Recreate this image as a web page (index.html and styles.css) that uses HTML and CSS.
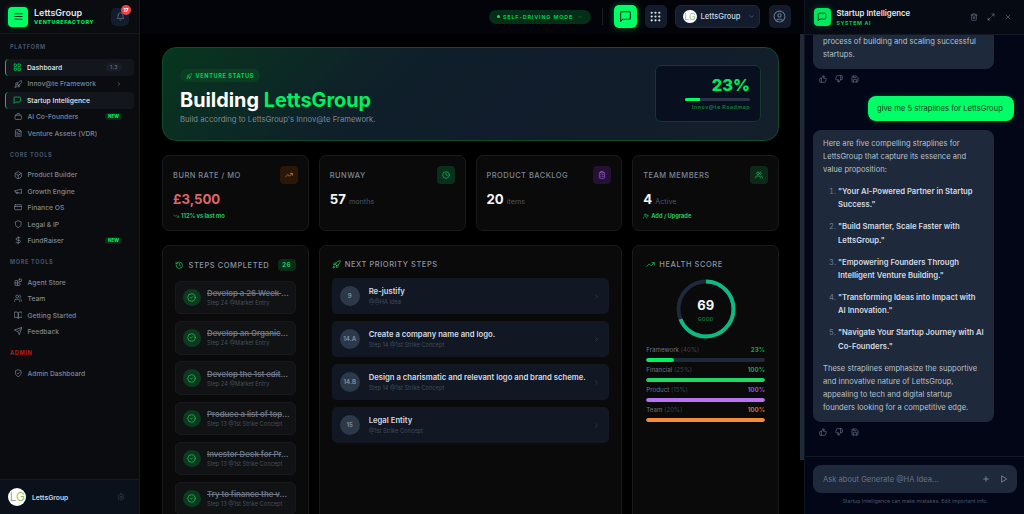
FILE: index.html
```html
<!DOCTYPE html>
<html lang="en">
<head>
    <meta charset="UTF-8">
    <meta name="viewport" content="width=device-width, initial-scale=1.0">
    <title>LettsGroup</title>
    <link rel="stylesheet" href="styles.css">
</head>
<body>
    <svg class="defs" width="0" height="0">
        <symbol id="i-menu" viewBox="0 0 24 24"><path d="M4 6h16M4 12h16M4 18h16"/></symbol>
        <symbol id="i-bell" viewBox="0 0 24 24"><path d="M6 8a6 6 0 0 1 12 0c0 7 3 9 3 9H3s3-2 3-9"/><path d="M10.3 21a1.94 1.94 0 0 0 3.4 0"/></symbol>
        <symbol id="i-dash" viewBox="0 0 24 24"><rect x="3" y="3" width="7" height="7" rx="1"/><rect x="14" y="3" width="7" height="7" rx="1"/><rect x="14" y="14" width="7" height="7" rx="1"/><rect x="3" y="14" width="7" height="7" rx="1"/></symbol>
        <symbol id="i-rocket" viewBox="0 0 24 24"><path d="M4.5 16.5c-1.5 1.26-2 5-2 5s3.74-.5 5-2c.71-.84.7-2.13-.09-2.91a2.18 2.18 0 0 0-2.91-.09z"/><path d="m12 15-3-3a22 22 0 0 1 2-3.95A12.88 12.88 0 0 1 22 2c0 2.72-.78 7.5-6 11a22.35 22.35 0 0 1-4 2z"/><path d="M9 12H4s.55-3.03 2-4c1.62-1.08 5 0 5 0"/><path d="M12 15v5s3.03-.55 4-2c1.08-1.62 0-5 0-5"/></symbol>
        <symbol id="i-msg" viewBox="0 0 24 24"><path d="M21 15a2 2 0 0 1-2 2H7l-4 4V5a2 2 0 0 1 2-2h14a2 2 0 0 1 2 2z"/></symbol>
        <symbol id="i-bot" viewBox="0 0 24 24"><rect x="3" y="9" width="18" height="12" rx="2"/><path d="M8 9V6a2 2 0 0 1 2-2h4a2 2 0 0 1 2 2v3"/></symbol>
        <symbol id="i-file" viewBox="0 0 24 24"><path d="M15 2H6a2 2 0 0 0-2 2v16a2 2 0 0 0 2 2h12a2 2 0 0 0 2-2V7z"/><path d="M14 2v5h6M16 13H8M16 17H8M10 9H8"/></symbol>
        <symbol id="i-box" viewBox="0 0 24 24"><path d="M21 8a2 2 0 0 0-1-1.73l-7-4a2 2 0 0 0-2 0l-7 4A2 2 0 0 0 3 8v8a2 2 0 0 0 1 1.73l7 4a2 2 0 0 0 2 0l7-4A2 2 0 0 0 21 16Z"/><path d="m3.3 7 8.7 5 8.7-5M12 22V12"/></symbol>
        <symbol id="i-mega" viewBox="0 0 24 24"><path d="m3 11 18-5v12L3 14v-3z"/><path d="M11.6 16.8a3 3 0 1 1-5.8-1.6"/></symbol>
        <symbol id="i-card" viewBox="0 0 24 24"><rect x="2" y="5" width="20" height="14" rx="2"/><path d="M2 10h20"/></symbol>
        <symbol id="i-shield" viewBox="0 0 24 24"><path d="M12 22s8-4 8-10V5l-8-3-8 3v7c0 6 8 10 8 10z"/></symbol>
        <symbol id="i-shieldc" viewBox="0 0 24 24"><path d="M12 22s8-4 8-10V5l-8-3-8 3v7c0 6 8 10 8 10z"/><path d="m9 12 2 2 4-4"/></symbol>
        <symbol id="i-dollar" viewBox="0 0 24 24"><path d="M12 2v20M17 5H9.5a3.5 3.5 0 0 0 0 7h5a3.5 3.5 0 0 1 0 7H6"/></symbol>
        <symbol id="i-blocks" viewBox="0 0 24 24"><rect x="14" y="3" width="7" height="7" rx="1"/><path d="M10 21V8a1 1 0 0 0-1-1H4a1 1 0 0 0-1 1v12a1 1 0 0 0 1 1h12a1 1 0 0 0 1-1v-5a1 1 0 0 0-1-1H3"/></symbol>
        <symbol id="i-users" viewBox="0 0 24 24"><path d="M16 21v-2a4 4 0 0 0-4-4H6a4 4 0 0 0-4 4v2"/><circle cx="9" cy="7" r="4"/><path d="M22 21v-2a4 4 0 0 0-3-3.87M16 3.13a4 4 0 0 1 0 7.75"/></symbol>
        <symbol id="i-book" viewBox="0 0 24 24"><path d="M2 3h6a4 4 0 0 1 4 4v14a3 3 0 0 0-3-3H2z"/><path d="M22 3h-6a4 4 0 0 0-4 4v14a3 3 0 0 1 3-3h7z"/></symbol>
        <symbol id="i-send" viewBox="0 0 24 24"><path d="m22 2-7 20-4-9-9-4Z"/><path d="M22 2 11 13"/></symbol>
        <symbol id="i-gear" viewBox="0 0 24 24"><path d="M12.22 2h-.44a2 2 0 0 0-2 2v.18a2 2 0 0 1-1 1.73l-.43.25a2 2 0 0 1-2 0l-.15-.08a2 2 0 0 0-2.73.73l-.22.38a2 2 0 0 0 .73 2.73l.15.1a2 2 0 0 1 1 1.72v.51a2 2 0 0 1-1 1.74l-.15.09a2 2 0 0 0-.73 2.73l.22.38a2 2 0 0 0 2.73.73l.15-.08a2 2 0 0 1 2 0l.43.25a2 2 0 0 1 1 1.73V20a2 2 0 0 0 2 2h.44a2 2 0 0 0 2-2v-.18a2 2 0 0 1 1-1.73l.43-.25a2 2 0 0 1 2 0l.15.08a2 2 0 0 0 2.73-.73l.22-.39a2 2 0 0 0-.73-2.73l-.15-.08a2 2 0 0 1-1-1.74v-.5a2 2 0 0 1 1-1.74l.15-.09a2 2 0 0 0 .73-2.73l-.22-.38a2 2 0 0 0-2.73-.73l-.15.08a2 2 0 0 1-2 0l-.43-.25a2 2 0 0 1-1-1.73V4a2 2 0 0 0-2-2z"/><circle cx="12" cy="12" r="3"/></symbol>
        <symbol id="i-right" viewBox="0 0 24 24"><path d="m9 18 6-6-6-6"/></symbol>
        <symbol id="i-down" viewBox="0 0 24 24"><path d="m6 9 6 6 6-6"/></symbol>
        <symbol id="i-trend" viewBox="0 0 24 24"><path d="M22 7l-8.500 8.500-5-5L2 17"/><path d="M16 7h6v6"/></symbol>
        <symbol id="i-trenddown" viewBox="0 0 24 24"><path d="M22 17l-8.500-8.500-5 5L2 7"/><path d="M16 17h6v-6"/></symbol>
        <symbol id="i-clock" viewBox="0 0 24 24"><circle cx="12" cy="12" r="10"/><path d="M12 6v6l4 2"/></symbol>
        <symbol id="i-clip" viewBox="0 0 24 24"><rect x="8" y="2" width="8" height="4" rx="1"/><path d="M16 4h2a2 2 0 0 1 2 2v14a2 2 0 0 1-2 2H6a2 2 0 0 1-2-2V6a2 2 0 0 1 2-2h2M12 11h4M12 16h4M8 11h.01M8 16h.01"/></symbol>
        <symbol id="i-userplus" viewBox="0 0 24 24"><path d="M16 21v-2a4 4 0 0 0-4-4H6a4 4 0 0 0-4 4v2"/><circle cx="9" cy="7" r="4"/><path d="M19 8v6M22 11h-6"/></symbol>
        <symbol id="i-history" viewBox="0 0 24 24"><path d="M3 12a9 9 0 1 0 9-9 9.750 9.750 0 0 0-6.740 2.740L3 8"/><path d="M3 3v5h5M12 7v5l4 2"/></symbol>
        <symbol id="i-check" viewBox="0 0 24 24"><circle cx="12" cy="12" r="10"/><path d="m9 12 2 2 4-4"/></symbol>
        <symbol id="i-up" viewBox="0 0 24 24"><path d="M7 10v12"/><path d="M15 5.880 14 10h5.830a2 2 0 0 1 1.920 2.560l-2.330 8A2 2 0 0 1 17.500 22H4a2 2 0 0 1-2-2v-8a2 2 0 0 1 2-2h2.760a2 2 0 0 0 1.790-1.110L12 2a3.130 3.130 0 0 1 3 3.880Z"/></symbol>
        <symbol id="i-dn" viewBox="0 0 24 24"><path d="M17 14V2"/><path d="M9 18.120 10 14H4.170a2 2 0 0 1-1.920-2.560l2.330-8A2 2 0 0 1 6.500 2H20a2 2 0 0 1 2 2v8a2 2 0 0 1-2 2h-2.760a2 2 0 0 0-1.790 1.110L12 22a3.130 3.130 0 0 1-3-3.880Z"/></symbol>
        <symbol id="i-save" viewBox="0 0 24 24"><path d="M15.200 3a2 2 0 0 1 1.400.6l3.800 3.800a2 2 0 0 1 .6 1.400V19a2 2 0 0 1-2 2H5a2 2 0 0 1-2-2V5a2 2 0 0 1 2-2z"/><path d="M17 21v-7a1 1 0 0 0-1-1H8a1 1 0 0 0-1 1v7M7 3v4a1 1 0 0 0 1 1h7"/></symbol>
        <symbol id="i-trash" viewBox="0 0 24 24"><path d="M3 6h18M19 6v14a2 2 0 0 1-2 2H7a2 2 0 0 1-2-2V6M8 6V4a2 2 0 0 1 2-2h4a2 2 0 0 1 2 2v2M10 11v6M14 11v6"/></symbol>
        <symbol id="i-expand" viewBox="0 0 24 24"><path d="m21 3-7 7M3 21l7-7M15 3h6v6M9 21H3v-6"/></symbol>
        <symbol id="i-x" viewBox="0 0 24 24"><path d="M18 6 6 18M6 6l12 12"/></symbol>
        <symbol id="i-plus" viewBox="0 0 24 24"><path d="M5 12h14M12 5v14"/></symbol>
        <symbol id="i-play" viewBox="0 0 24 24"><path d="M6 3l14 9-14 9z"/></symbol>
        <symbol id="i-user" viewBox="0 0 24 24"><circle cx="12" cy="12" r="10"/><circle cx="12" cy="10" r="3"/><path d="M7 20.660V19a2 2 0 0 1 2-2h6a2 2 0 0 1 2 2v1.660"/></symbol>
    </svg>

    <div class="app">

        <aside class="sidebar">
            <div class="side-head">
                <div class="logo"><svg class="ic"><use href="#i-menu"/></svg></div>
                <div class="brand">
                    <div class="brand-name">LettsGroup</div>
                    <div class="brand-sub">VENTUREFACTORY</div>
                </div>
                <div class="bell">
                    <svg class="ic"><use href="#i-bell"/></svg>
                    <span class="bell-count">17</span>
                </div>
            </div>

            <nav class="side-nav">
                <div class="nav-label">PLATFORM</div>
                <a class="nav-item active"><svg class="ic green"><use href="#i-dash"/></svg>Dashboard<span class="ver">1.3</span></a>
                <a class="nav-item"><svg class="ic"><use href="#i-rocket"/></svg>Innov@te Framework<svg class="ic nav-arrow"><use href="#i-right"/></svg></a>
                <a class="nav-item active"><svg class="ic green"><use href="#i-msg"/></svg>Startup Intelligence</a>
                <a class="nav-item"><svg class="ic"><use href="#i-bot"/></svg>AI Co-Founders<span class="new">NEW</span></a>
                <a class="nav-item"><svg class="ic"><use href="#i-file"/></svg>Venture Assets (VDR)</a>

                <div class="nav-label">CORE TOOLS</div>
                <a class="nav-item"><svg class="ic"><use href="#i-box"/></svg>Product Builder</a>
                <a class="nav-item"><svg class="ic"><use href="#i-mega"/></svg>Growth Engine</a>
                <a class="nav-item"><svg class="ic"><use href="#i-card"/></svg>Finance OS</a>
                <a class="nav-item"><svg class="ic"><use href="#i-shield"/></svg>Legal &amp; IP</a>
                <a class="nav-item"><svg class="ic"><use href="#i-dollar"/></svg>FundRaiser<span class="new">NEW</span></a>

                <div class="nav-label">MORE TOOLS</div>
                <a class="nav-item"><svg class="ic"><use href="#i-blocks"/></svg>Agent Store</a>
                <a class="nav-item"><svg class="ic"><use href="#i-users"/></svg>Team</a>
                <a class="nav-item"><svg class="ic"><use href="#i-book"/></svg>Getting Started</a>
                <a class="nav-item"><svg class="ic"><use href="#i-send"/></svg>Feedback</a>

                <div class="nav-label red">ADMIN</div>
                <a class="nav-item"><svg class="ic"><use href="#i-shieldc"/></svg>Admin Dashboard</a>
            </nav>

            <div class="side-foot">
                <div class="avatar"><span>L</span><span class="avatar-g">G</span></div>
                <div class="foot-name">LettsGroup</div>
                <svg class="ic foot-gear"><use href="#i-gear"/></svg>
            </div>
        </aside>

        <main class="main">
            <header class="topbar">
                <div class="mode"><span class="mode-dot"></span>SELF-DRIVING MODE<svg class="ic"><use href="#i-down"/></svg></div>
                <div class="top-sep"></div>
                <div class="top-btn chat-btn"><svg class="ic"><use href="#i-msg"/></svg></div>
                <div class="top-btn">
                    <svg class="ic dots" viewBox="0 0 24 24"><circle cx="5" cy="5" r="2"/><circle cx="12" cy="5" r="2"/><circle cx="19" cy="5" r="2"/><circle cx="5" cy="12" r="2"/><circle cx="12" cy="12" r="2"/><circle cx="19" cy="12" r="2"/><circle cx="5" cy="19" r="2"/><circle cx="12" cy="19" r="2"/><circle cx="19" cy="19" r="2"/></svg>
                </div>
                <div class="org">
                    <div class="avatar small"><span>L</span><span class="avatar-g">G</span></div>
                    LettsGroup
                    <svg class="ic"><use href="#i-down"/></svg>
                </div>
                <div class="top-btn user-btn"><svg class="ic"><use href="#i-user"/></svg></div>
            </header>

            <div class="main-body">
                <div class="content">
                    <section class="hero">
                        <div>
                            <div class="tag"><svg class="ic"><use href="#i-rocket"/></svg>VENTURE STATUS</div>
                            <h1>Building <span>LettsGroup</span></h1>
                            <p>Build according to LettsGroup's Innov@te Framework.</p>
                        </div>
                        <div class="road">
                            <div class="road-pct">23%</div>
                            <div class="road-bar"><div class="road-fill"></div></div>
                            <div class="road-label">Innov@te Roadmap</div>
                        </div>
                    </section>

                    <section class="stats">
                        <div class="card stat">
                            <div class="stat-head">BURN RATE / MO<div class="stat-ic orange"><svg class="ic"><use href="#i-trend"/></svg></div></div>
                            <div class="stat-val burn">£3,500</div>
                            <div class="stat-note"><svg class="ic"><use href="#i-trenddown"/></svg>112% vs last mo</div>
                        </div>
                        <div class="card stat">
                            <div class="stat-head">RUNWAY<div class="stat-ic greenbox"><svg class="ic"><use href="#i-clock"/></svg></div></div>
                            <div class="stat-val">57 <small>months</small></div>
                        </div>
                        <div class="card stat">
                            <div class="stat-head">PRODUCT BACKLOG<div class="stat-ic purple"><svg class="ic"><use href="#i-clip"/></svg></div></div>
                            <div class="stat-val">20 <small>items</small></div>
                        </div>
                        <div class="card stat">
                            <div class="stat-head">TEAM MEMBERS<div class="stat-ic teal"><svg class="ic"><use href="#i-users"/></svg></div></div>
                            <div class="stat-val">4 <small>Active</small></div>
                            <div class="stat-note"><svg class="ic"><use href="#i-userplus"/></svg>Add / Upgrade</div>
                        </div>
                    </section>

                    <section class="lower">
                        <div class="card steps">
                            <div class="steps-head"><svg class="ic"><use href="#i-history"/></svg>STEPS COMPLETED<span class="count">26</span></div>
                            <div class="step"><div class="step-ic"><svg class="ic"><use href="#i-check"/></svg></div><div class="step-txt"><div class="step-t"><s>Develop a 26 Week </s>...</div><div class="step-s">Step 24 @Market Entry</div></div></div>
                            <div class="step"><div class="step-ic"><svg class="ic"><use href="#i-check"/></svg></div><div class="step-txt"><div class="step-t"><s>Develop an Organic</s>...</div><div class="step-s">Step 24 @Market Entry</div></div></div>
                            <div class="step"><div class="step-ic"><svg class="ic"><use href="#i-check"/></svg></div><div class="step-txt"><div class="step-t"><s>Develop the 1st edit</s>...</div><div class="step-s">Step 24 @Market Entry</div></div></div>
                            <div class="step"><div class="step-ic"><svg class="ic"><use href="#i-check"/></svg></div><div class="step-txt"><div class="step-t"><s>Produce a list of top</s>...</div><div class="step-s">Step 13 @1st Strike Concept</div></div></div>
                            <div class="step"><div class="step-ic"><svg class="ic"><use href="#i-check"/></svg></div><div class="step-txt"><div class="step-t"><s>Investor Deck for Pr</s>...</div><div class="step-s">Step 13 @1st Strike Concept</div></div></div>
                            <div class="step"><div class="step-ic"><svg class="ic"><use href="#i-check"/></svg></div><div class="step-txt"><div class="step-t"><s>Try to finance the v</s>...</div><div class="step-s">Step 13 @1st Strike Concept</div></div></div>
                        </div>

                        <div class="card next">
                            <div class="card-head"><svg class="ic"><use href="#i-rocket"/></svg>NEXT PRIORITY STEPS</div>
                            <div class="prio"><div class="prio-num">9</div><div class="prio-txt"><div class="prio-t">Re-justify</div><div class="prio-s">@@HA Idea</div></div><svg class="ic"><use href="#i-right"/></svg></div>
                            <div class="prio"><div class="prio-num">14.A</div><div class="prio-txt"><div class="prio-t">Create a company name and logo.</div><div class="prio-s">Step 14 @1st Strike Concept</div></div><svg class="ic"><use href="#i-right"/></svg></div>
                            <div class="prio"><div class="prio-num">14.B</div><div class="prio-txt"><div class="prio-t">Design a charismatic and relevant logo and brand scheme.</div><div class="prio-s">Step 14 @1st Strike Concept</div></div><svg class="ic"><use href="#i-right"/></svg></div>
                            <div class="prio"><div class="prio-num">15</div><div class="prio-txt"><div class="prio-t">Legal Entity</div><div class="prio-s">@1st Strike Concept</div></div><svg class="ic"><use href="#i-right"/></svg></div>
                        </div>

                        <div class="card health">
                            <div class="card-head"><svg class="ic"><use href="#i-trend"/></svg>HEALTH SCORE</div>
                            <div class="ring">
                                <svg viewBox="0 0 60 60">
                                    <circle class="ring-bg" cx="30" cy="30" r="27.500"/>
                                    <circle class="ring-fg" cx="30" cy="30" r="27.500" pathLength="100" stroke-dasharray="69 100" transform="rotate(-90 30 30)"/>
                                </svg>
                                <div class="ring-txt"><b>69</b><span>GOOD</span></div>
                            </div>
                            <div class="meter"><div class="meter-row"><span>Framework <i>(40%)</i></span><b class="c-green">23%</b></div><div class="meter-bar"><div class="meter-fill bg-green" style="width:23%"></div></div></div>
                            <div class="meter"><div class="meter-row"><span>Financial <i>(25%)</i></span><b class="c-lime">100%</b></div><div class="meter-bar"><div class="meter-fill bg-lime" style="width:100%"></div></div></div>
                            <div class="meter"><div class="meter-row"><span>Product <i>(15%)</i></span><b class="c-purple">100%</b></div><div class="meter-bar"><div class="meter-fill bg-purple" style="width:100%"></div></div></div>
                            <div class="meter"><div class="meter-row"><span>Team <i>(20%)</i></span><b class="c-orange">100%</b></div><div class="meter-bar"><div class="meter-fill bg-orange" style="width:100%"></div></div></div>
                        </div>
                    </section>
                </div>
                <div class="main-thumb"></div>
            </div>
        </main>

        <aside class="chat">
            <div class="chat-head">
                <div class="chat-logo"><svg class="ic"><use href="#i-msg"/></svg></div>
                <div class="chat-title">
                    <div class="chat-name">Startup Intelligence</div>
                    <div class="chat-sub">SYSTEM AI</div>
                </div>
                <div class="chat-tools">
                    <svg class="ic"><use href="#i-trash"/></svg>
                    <svg class="ic"><use href="#i-expand"/></svg>
                    <svg class="ic"><use href="#i-x"/></svg>
                </div>
            </div>

            <div class="chat-msgs">
                <div class="bubble first">process of building and scaling successful startups.</div>
                <div class="msg-acts">
                    <svg class="ic"><use href="#i-up"/></svg>
                    <svg class="ic"><use href="#i-dn"/></svg>
                    <svg class="ic"><use href="#i-save"/></svg>
                </div>
                <div class="bubble me">give me 5 straplines for LettsGroup</div>
                <div class="bubble">
                    <p>Here are five compelling straplines for LettsGroup that capture its essence and value proposition:</p>
                    <ol>
                        <li><b>"Your AI-Powered Partner in Startup Success."</b></li>
                        <li><b>"Build Smarter, Scale Faster with LettsGroup."</b></li>
                        <li><b>"Empowering Founders Through Intelligent Venture Building."</b></li>
                        <li><b>"Transforming Ideas into Impact with AI Innovation."</b></li>
                        <li><b>"Navigate Your Startup Journey with AI Co-Founders."</b></li>
                    </ol>
                    <p class="last">These straplines emphasize the supportive and innovative nature of LettsGroup, appealing to tech and digital startup founders looking for a competitive edge.</p>
                </div>
                <div class="msg-acts">
                    <svg class="ic"><use href="#i-up"/></svg>
                    <svg class="ic"><use href="#i-dn"/></svg>
                    <svg class="ic"><use href="#i-save"/></svg>
                </div>
            </div>

            <div class="chat-foot">
                <div class="chat-input">
                    <span>Ask about Generate @HA Idea...</span>
                    <svg class="ic"><use href="#i-plus"/></svg>
                    <svg class="ic"><use href="#i-play"/></svg>
                </div>
                <div class="chat-note">Startup Intelligence can make mistakes. Edit important info.</div>
            </div>
        </aside>
    </div>
</body>
</html>
```

FILE: styles.css
```css
*{
    margin: 0;
    padding: 0;
    box-sizing: border-box;
}
html, body{
    height: 100%;
    overflow: hidden;
    background: #000;
}
body{
    font-family: Inter, "Liberation Sans", sans-serif;
    color: #e2e8f0;
}
.defs{
    position: absolute;
}
.ic{
    width: 8px;
    height: 8px;
    flex: none;
    fill: none;
    stroke: currentColor;
    stroke-width: 2;
    stroke-linecap: round;
    stroke-linejoin: round;
}
.app{
    display: flex;
    height: 514px;
}

/* sidebar */
.sidebar{
    width: 140px;
    flex: none;
    display: flex;
    flex-direction: column;
    background: #0a0c10;
    border-right: 1px solid #14181f;
}
.side-head{
    height: 34px;
    flex: none;
    display: flex;
    align-items: center;
    padding: 0 10px 0 8px;
    border-bottom: 1px solid #141a24;
}
.logo{
    width: 20px;
    height: 20px;
    border-radius: 4px;
    background: #00ff66;
    color: #06210f;
    display: flex;
    align-items: center;
    justify-content: center;
    box-shadow: 0 0 6px rgba(0,255,102,.25);
}
.logo .ic{
    width: 11px;
    height: 11px;
}
.brand{
    margin-left: 6px;
    flex: 1;
}
.brand-name{
    font-size: 9px;
    font-weight: 600;
    line-height: 11px;
    color: #dfe5ed;
}
.brand-sub{
    font-size: 5.400px;
    font-weight: 800;
    line-height: 8px;
    letter-spacing: .6px;
    color: #00e85d;
}
.bell{
    position: relative;
    width: 18px;
    height: 18px;
    border-radius: 5px;
    background: #131c2c;
    color: #64748b;
    display: flex;
    align-items: center;
    justify-content: center;
}
.bell .ic{
    width: 9px;
    height: 9px;
}
.bell-count{
    position: absolute;
    top: -3px;
    right: -2px;
    width: 10px;
    height: 10px;
    border-radius: 50%;
    background: #ef4444;
    color: #fff;
    font-size: 5px;
    font-weight: 700;
    line-height: 10px;
    text-align: center;
}
.side-nav{
    flex: 1;
    padding: 0 5px;
}
.nav-label{
    padding-left: 5px;
    margin: 9.200px 0 7px;
    height: 9px;
    line-height: 9px;
    font-size: 5.500px;
    font-weight: 700;
    letter-spacing: .7px;
    color: #475569;
}
.nav-label.red{
    color: #b91c1c;
}
.nav-item{
    display: flex;
    align-items: center;
    height: 16.450px;
    padding-left: 8.500px;
    padding-right: 12px;
    font-size: 6.750px;
    font-weight: 500;
    color: #7c8797;
    border-radius: 4px;
}
.nav-item > .ic:first-child{
    width: 8.500px;
    height: 8.500px;
    margin-right: 5.500px;
}
.nav-item.active{
    background: #13161c;
    color: #e2e8f0;
    border-left: 1.500px solid #00c853;
    padding-left: 7px;
}
.ic.green{
    color: #00d455;
}
.nav-arrow{
    margin-left: auto;
    width: 6px;
    height: 6px;
}
.ver{
    margin-left: auto;
    font-size: 5px;
    background: #1a1e26;
    padding: 1px 4px;
    border-radius: 4px;
    color: #64748b;
    letter-spacing: .5px;
}
.new{
    margin-left: auto;
    font-size: 4.500px;
    font-weight: 800;
    background: #0d2a19;
    color: #00e85d;
    padding: 1px 3px;
    border-radius: 3px;
}
.side-foot{
    height: 35px;
    flex: none;
    display: flex;
    align-items: center;
    padding: 0 14px 0 8px;
    background: #0b111b;
    border-top: 1px solid #141a24;
}
.avatar{
    width: 18px;
    height: 18px;
    border-radius: 50%;
    background: #fff;
    color: #8a9099;
    display: flex;
    align-items: center;
    justify-content: center;
    font-size: 12px;
    font-weight: 300;
    letter-spacing: -.5px;
    line-height: 1;
    flex: none;
}
.avatar-g{
    color: #7cb342;
}
.avatar.small{
    width: 13.500px;
    height: 13.500px;
    font-size: 9px;
}
.foot-name{
    margin-left: 6px;
    flex: 1;
    font-size: 6.800px;
    font-weight: 600;
    color: #cbd5e1;
}
.foot-gear{
    color: #334155;
}

/* top bar */
.main{
    flex: 1;
    min-width: 0;
    display: flex;
    flex-direction: column;
    background: #000;
}
.topbar{
    height: 34px;
    flex: none;
    display: flex;
    align-items: center;
    justify-content: flex-end;
    padding: 0 13px 1px 0;
    background: #02040a;
}
.mode{
    height: 14px;
    width: 102px;
    border-radius: 7px;
    background: #052e16;
    color: #00c853;
    display: flex;
    align-items: center;
    justify-content: center;
    font-size: 5.400px;
    font-weight: 700;
    letter-spacing: .85px;
}
.mode .ic{
    width: 6px;
    height: 6px;
    margin-left: 4px;
    color: #15803d;
}
.mode-dot{
    width: 3px;
    height: 3px;
    border-radius: 50%;
    background: #00e85d;
    margin-right: 3px;
}
.top-sep{
    width: 1px;
    height: 17px;
    background: #18202c;
    margin: 0 11px;
}
.top-btn{
    width: 22.500px;
    height: 22.500px;
    border-radius: 5px;
    background: #131c2c;
    color: #94a3b8;
    display: flex;
    align-items: center;
    justify-content: center;
    margin-right: 8px;
}
.top-btn .ic{
    width: 13px;
    height: 13px;
}
.chat-btn{
    background: #00ff66;
    color: #05361a;
    box-shadow: 0 0 7px rgba(0,255,102,.4);
}
.dots{
    fill: #e2e8f0;
    stroke: none;
}
.org{
    width: 85px;
    height: 23px;
    border-radius: 6px;
    background: #131c2c;
    border: 1px solid #1e293b;
    display: flex;
    align-items: center;
    padding-left: 7px;
    gap: 4px;
    font-size: 7.600px;
    font-weight: 500;
    color: #cbd5e1;
    margin-right: 8.500px;
}
.org .ic{
    width: 7px;
    height: 7px;
    margin-left: 3px;
    color: #64748b;
}
.user-btn{
    margin-right: 0;
    color: #64748b;
}
.main-body{
    flex: 1;
    min-height: 0;
    display: flex;
}
.content{
    flex: 1;
    min-width: 0;
    padding: 13px 21px 0 22px;
    overflow: hidden;
}
.main-thumb{
    width: 4px;
    height: 426px;
    flex: none;
    background: #1e293b;
}

/* hero */
.hero{
    height: 94px;
    display: flex;
    align-items: center;
    justify-content: space-between;
    padding: 0 17px;
    border: 1px solid #124a2a;
    border-radius: 14px;
    background: linear-gradient(135deg, #07361e 0%, #0f2029 35%, #111c2c 60%, #131f2a 100%);
}
.tag{
    display: inline-flex;
    align-items: center;
    height: 13px;
    padding: 0 6px;
    border-radius: 7px;
    background: #0b3d22;
    color: #00d455;
    font-size: 5.600px;
    font-weight: 700;
    letter-spacing: .6px;
}
.tag .ic{
    width: 6.500px;
    height: 6.500px;
    margin-right: 3px;
}
.hero h1{
    font-size: 19.850px;
    font-weight: 700;
    line-height: 24px;
    margin-top: 5px;
    color: #fff;
}
.hero h1 span{
    color: #00f060;
}
.hero p{
    font-size: 7.700px;
    line-height: 11px;
    margin-top: 2px;
    color: #7c8797;
}
.road{
    width: 106px;
    height: 57px;
    padding: 10px 10px 0 0;
    margin-top: -1px;
    border: 1px solid #103a2a;
    border-radius: 6px;
    background: #08101f;
    text-align: right;
}
.road-pct{
    font-size: 16.500px;
    font-weight: 800;
    line-height: 18px;
    color: #00e85d;
}
.road-bar{
    width: 65px;
    height: 3px;
    margin: 3.500px 0 0 auto;
    border-radius: 2px;
    background: #2a3648;
    overflow: hidden;
}
.road-fill{
    width: 23%;
    height: 100%;
    background: #00ff66;
}
.road-label{
    margin-top: 3.500px;
    font-size: 5.300px;
    font-weight: 600;
    letter-spacing: .5px;
    color: #15803d;
}

/* cards */
.card{
    background: #0a0a0a;
    border: 1px solid #181a1e;
    border-radius: 7px;
}
.stats{
    display: grid;
    grid-template-columns: repeat(4, 1fr);
    gap: 10px;
    margin-top: 14px;
}
.stat{
    height: 76px;
    padding: 10px 10px 0 10px;
}
.stat-head{
    display: flex;
    align-items: center;
    justify-content: space-between;
    font-size: 7.500px;
    font-weight: 500;
    letter-spacing: .45px;
    color: #7c8797;
}
.stat-ic{
    width: 18px;
    height: 18px;
    border-radius: 4px;
    display: flex;
    align-items: center;
    justify-content: center;
}
.orange{
    background: #2a1708;
    color: #f08c3a;
}
.greenbox{
    background: #08301a;
    color: #16c45c;
}
.purple{
    background: #231233;
    color: #a35fe0;
}
.teal{
    background: #0c2a19;
    color: #2eb865;
}
.stat-val{
    margin-top: 7px;
    height: 17px;
    line-height: 17px;
    font-size: 13.200px;
    font-weight: 700;
    color: #f5f7fa;
}
.stat-val small{
    font-size: 7.200px;
    font-weight: 400;
    color: #4b5563;
}
.stat-val.burn{
    color: #e0656b;
}
.stat-note{
    display: flex;
    align-items: center;
    margin-top: 4px;
    font-size: 5.700px;
    font-weight: 700;
    color: #22c55e;
}
.stat-note .ic{
    width: 6px;
    height: 6px;
    margin-right: 2px;
}
.lower{
    display: grid;
    grid-template-columns: 1fr 2.070fr 1fr;
    gap: 10px;
    margin-top: 14px;
}
.lower .card{
    height: 280px;
    overflow: hidden;
}
.steps{
    padding: 13px 12px 0;
}
.steps-head{
    display: flex;
    align-items: center;
    height: 12px;
    font-size: 7.500px;
    font-weight: 500;
    letter-spacing: .55px;
    color: #8a94a3;
    margin-bottom: 10px;
}
.steps-head .ic{
    color: #22c55e;
    width: 8.500px;
    height: 8.500px;
    margin-right: 5px;
}
.count{
    margin-left: auto;
    width: 18px;
    height: 12px;
    line-height: 12px;
    text-align: center;
    border-radius: 4px;
    background: #0b2c18;
    color: #22c55e;
    font-size: 6.300px;
    font-weight: 700;
}
.step{
    height: 33.400px;
    display: flex;
    align-items: center;
    padding: 0 7px;
    margin-bottom: 6.800px;
    border: 1px solid #16181c;
    border-radius: 5px;
    background: #111213;
}
.step-ic{
    width: 17.500px;
    height: 17.500px;
    border-radius: 50%;
    background: #0d3a1e;
    color: #22c55e;
    display: flex;
    align-items: center;
    justify-content: center;
    flex: none;
}
.step-ic .ic{
    width: 9px;
    height: 9px;
}
.step-txt{
    margin-left: 6.500px;
    min-width: 0;
}
.step-t{
    font-size: 7.800px;
    font-weight: 600;
    line-height: 10px;
    color: #6b7585;
    white-space: nowrap;
}
.step-s{
    font-size: 5.700px;
    line-height: 8px;
    margin-top: 1px;
    color: #454f5e;
    white-space: nowrap;
}
.next{
    padding: 12px 12px 0;
}
.card-head{
    display: flex;
    align-items: center;
    height: 12px;
    font-size: 7.500px;
    font-weight: 500;
    letter-spacing: .55px;
    color: #8a94a3;
    margin-bottom: 8px;
}
.card-head .ic{
    color: #22c55e;
    width: 9px;
    height: 9px;
    margin-right: 4px;
}
.prio{
    height: 36.300px;
    display: flex;
    align-items: center;
    padding: 0 9px 0 8px;
    margin-bottom: 6.700px;
    border-radius: 5px;
    background: #111823;
}
.prio > .ic{
    width: 7px;
    height: 7px;
    color: #3f4b5c;
}
.prio-num{
    width: 20px;
    height: 20px;
    border-radius: 50%;
    background: #2c394b;
    color: #7c8797;
    font-size: 6px;
    font-weight: 700;
    line-height: 20px;
    text-align: center;
    flex: none;
}
.prio-txt{
    flex: 1;
    margin-left: 9px;
}
.prio-t{
    font-size: 7.700px;
    font-weight: 600;
    line-height: 10px;
    color: #d5dbe3;
}
.prio-s{
    font-size: 5.700px;
    line-height: 8px;
    margin-top: 1px;
    color: #3f4b5c;
}
.health{
    padding: 12px 13px 0;
}
.health .card-head{
    margin-bottom: 9px;
}
.ring{
    position: relative;
    width: 60px;
    height: 60px;
    margin: 0 auto 6px;
}
.ring svg{
    width: 100%;
    height: 100%;
    fill: none;
    stroke-width: 4;
}
.ring-bg{
    stroke: #1e293b;
}
.ring-fg{
    stroke: #10b981;
}
.ring-txt{
    position: absolute;
    inset: 0;
    display: flex;
    flex-direction: column;
    align-items: center;
    justify-content: center;
    padding-top: 1px;
}
.ring-txt b{
    font-size: 13px;
    font-weight: 700;
    line-height: 15px;
    color: #f5f7fa;
}
.ring-txt span{
    margin-top: 3px;
    font-size: 4.800px;
    font-weight: 600;
    letter-spacing: .4px;
    color: #15803d;
}
.meter{
    margin-bottom: 3.500px;
}
.meter-row{
    display: flex;
    justify-content: space-between;
    height: 10px;
    line-height: 10px;
    font-size: 6.200px;
    color: #6b7583;
}
.meter-row i{
    font-style: normal;
    color: #374151;
}
.meter-row b{
    font-weight: 700;
}
.meter-bar{
    height: 3.500px;
    margin-top: 3px;
    border-radius: 2px;
    background: #1e293b;
    overflow: hidden;
}
.meter-fill{
    height: 100%;
    border-radius: 2px;
}
.bg-green{ background: #00f060; }
.bg-lime{ background: #22d565; }
.bg-purple{ background: #b874f0; }
.bg-orange{ background: #f08c3a; }
.c-green{ color: #16a34a; }
.c-lime{ color: #16a34a; }
.c-purple{ color: #9654cc; }
.c-orange{ color: #c9742e; }

/* chat panel */
.chat{
    width: 220px;
    flex: none;
    display: flex;
    flex-direction: column;
    background: #020617;
    border-left: 1px solid #10161f;
}
.chat-head{
    height: 35px;
    flex: none;
    display: flex;
    align-items: center;
    padding: 0 12px 0 8.500px;
    background: #060a12;
    border-bottom: 1px solid #131a26;
}
.chat-logo{
    width: 17.500px;
    height: 17.500px;
    border-radius: 4px;
    background: #00e85d;
    color: #06361a;
    display: flex;
    align-items: center;
    justify-content: center;
    box-shadow: 0 0 6px rgba(0,255,102,.3);
}
.chat-logo .ic{
    width: 10px;
    height: 10px;
}
.chat-title{
    flex: 1;
    margin-left: 5.500px;
}
.chat-name{
    font-size: 7.800px;
    font-weight: 600;
    line-height: 10px;
    color: #e2e8f0;
}
.chat-sub{
    font-size: 5.300px;
    font-weight: 700;
    line-height: 8px;
    letter-spacing: .6px;
    color: #00c853;
    margin-top: 1px;
}
.chat-tools{
    display: flex;
    gap: 9px;
    color: #64748b;
}
.chat-msgs{
    flex: 1;
    min-height: 0;
    overflow: hidden;
    padding: 0 8px;
    display: flex;
    flex-direction: column;
}
.bubble{
    width: 181px;
    padding: 0 10px;
    background: #1e293b;
    border-radius: 8px;
    font-size: 7.600px;
    line-height: 13.300px;
    color: #b6c0cd;
}
.bubble.first{
    padding: 0 10px 7px;
    border-radius: 0 0 8px 8px;
}
.bubble.me{
    width: 146px;
    height: 25px;
    align-self: flex-end;
    margin: 13px 2px 9px 0;
    padding: 0 9px;
    line-height: 25px;
    background: #00ff66;
    color: #0b3a22;
    box-shadow: 0 0 6px rgba(0,255,102,.2);
    white-space: nowrap;
}
.bubble p{
    padding-top: 7px;
}
.bubble p.last{
    padding: 8.700px 0 7.500px;
}
.bubble ol{
    padding-left: 15px;
}
.bubble li{
    margin-top: 8.700px;
    color: #6f7c8e;
}
.bubble b{
    color: #d5dbe3;
    font-size: 7.700px;
    font-weight: 600;
}
.msg-acts{
    display: flex;
    gap: 8px;
    padding: 6px 0 0 6px;
    color: #64748b;
}
.chat-foot{
    height: 58px;
    flex: none;
    padding: 8px 7px 0 8px;
    border-top: 1px solid #131a26;
}
.chat-input{
    height: 28px;
    display: flex;
    align-items: center;
    gap: 10px;
    padding: 0 9px 0 10px;
    border-radius: 8px;
    background: #1e293b;
    font-size: 7.600px;
    color: #64748b;
}
.chat-input span{
    flex: 1;
}
.chat-input .ic{
    color: #94a3b8;
}
.chat-note{
    margin-top: 5px;
    text-align: center;
    font-size: 5.200px;
    color: #475569;
}
```
